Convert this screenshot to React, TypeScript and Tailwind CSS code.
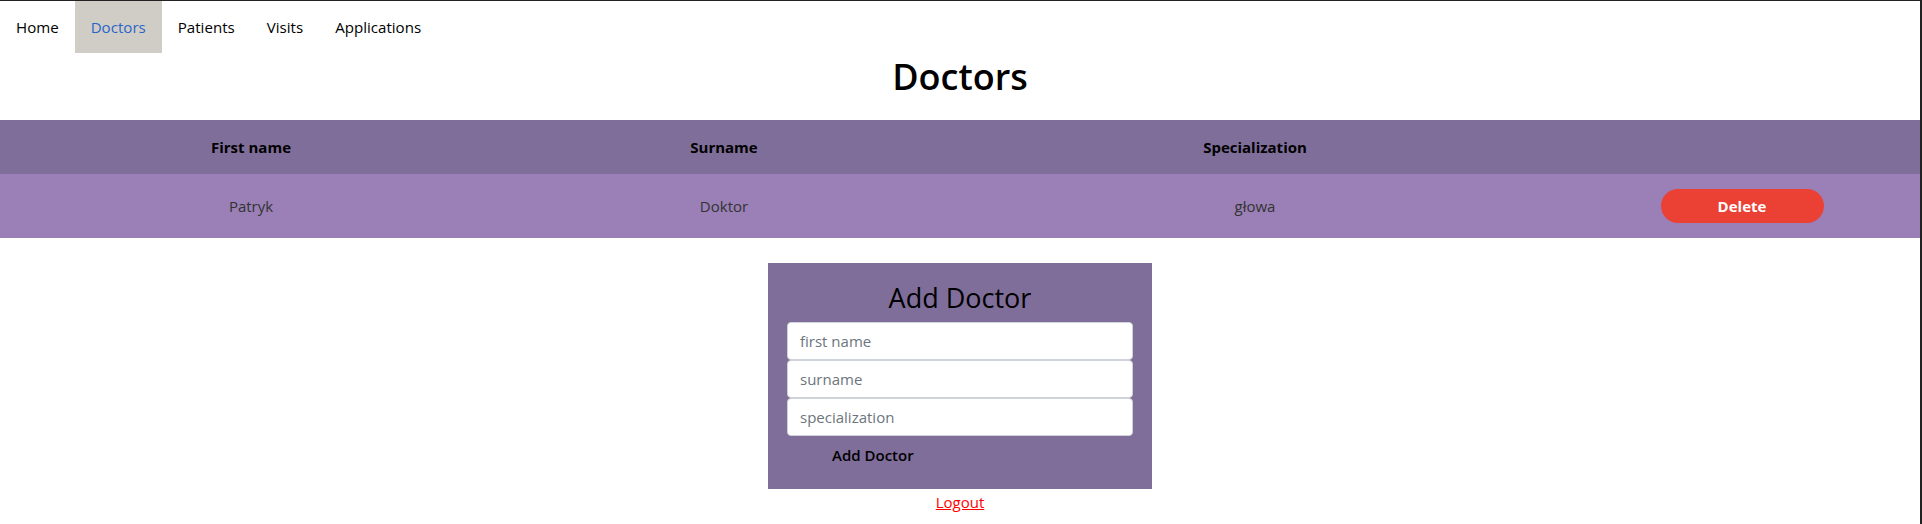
import { useState } from 'react'

const navItems = ['Home', 'Doctors', 'Patients', 'Visits', 'Applications']

const doctors = [{ id: 1, firstName: 'Patryk', surname: 'Doktor', specialization: 'głowa' }]

export default function App() {
  const [list, setList] = useState(doctors)

  return (
    <div
      className="h-[524px] w-[1922px] border-t border-r-2 border-[#222] bg-white text-black"
      style={{ fontFamily: '"Open Sans", "Noto Sans", sans-serif' }}
    >
      <nav className="flex">
        {navItems.map((item) => (
          <a
            key={item}
            href="#"
            className={
              item === 'Doctors'
                ? 'bg-[#d0cdc6] px-4 py-[14px] text-[15.1px] leading-6 text-[#2a66c9]'
                : 'px-4 py-[14px] text-[15.1px] leading-6 text-black'
            }
          >
            {item}
          </a>
        ))}
      </nav>

      <h1 className="pt-[2px] pb-[22px] text-center text-[36px] font-semibold leading-[43px]">Doctors</h1>

      <table className="w-[1920px] table-fixed border-collapse">
        <thead>
          <tr className="bg-[#806e9a]">
            <th className="h-[54px] w-[502px] text-[15px] font-bold">First name</th>
            <th className="h-[54px] w-[444px] text-[15px] font-bold">Surname</th>
            <th className="h-[54px] w-[618px] text-[15px] font-bold">Specialization</th>
            <th className="h-[54px]" />
          </tr>
        </thead>
        <tbody>
          {list.map((d) => (
            <tr key={d.id} className="bg-[#9a80b6] text-[15px] text-[#333]">
              <td className="h-[64px] text-center">{d.firstName}</td>
              <td className="h-[64px] text-center">{d.surname}</td>
              <td className="h-[64px] text-center">{d.specialization}</td>
              <td className="h-[64px] text-center">
                <button
                  onClick={() => setList(list.filter((x) => x.id !== d.id))}
                  className="h-[34px] w-[163px] rounded-full bg-[#eb4034] text-[15px] font-bold text-white"
                >
                  Delete
                </button>
              </td>
            </tr>
          ))}
        </tbody>
      </table>

      <div className="mx-auto mt-[25px] flex w-[384px] flex-col bg-[#806e9a] px-[19px] pt-[19px] pb-[15px]">
        <h2 className="text-center text-[27px] leading-[32px]">Add Doctor</h2>
        <div className="mt-[8px] flex flex-col">
          {['first name', 'surname', 'specialization'].map((p) => (
            <input
              key={p}
              placeholder={p}
              className="h-[38px] w-full rounded-[4px] border border-[#ced4da] bg-white px-3 text-[15px] text-[#495057] placeholder:text-[#6c757d]"
            />
          ))}
        </div>
        <button className="ml-[45px] h-[38px] self-start text-[15px] font-semibold">Add Doctor</button>
      </div>

      <div className="mt-px text-center leading-6">
        <a href="#" className="text-[15px] text-[#ff0000] underline">
          Logout
        </a>
      </div>
    </div>
  )
}
